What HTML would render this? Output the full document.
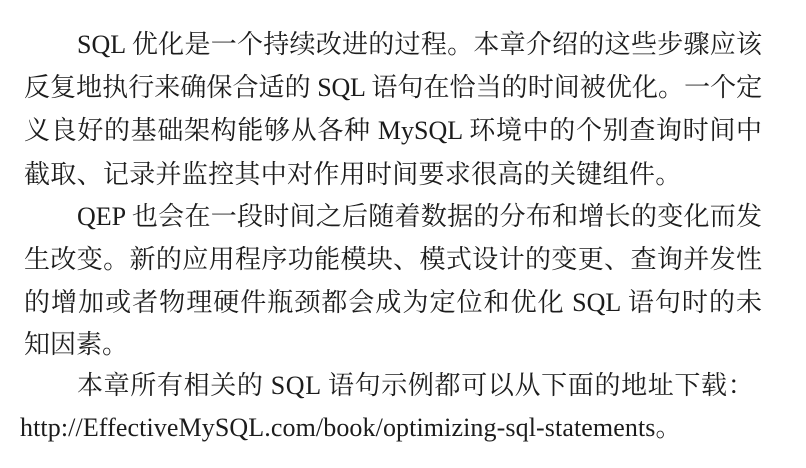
<!DOCTYPE html>
<html><head><meta charset="utf-8"><style>
html,body{margin:0;padding:0;background:#fff;width:806px;height:468px;overflow:hidden}
.l{position:absolute;left:24px;width:738px;height:43px;line-height:43px;font-size:26px;color:#1c1c1c;
font-family:"Liberation Serif","Noto Serif CJK SC",serif;white-space:nowrap}
.j{text-align:justify;text-align-last:justify}
.i{left:77px;width:685px}
</style></head><body>
<div class="l j i" style="top:23px">SQL 优化是一个持续改进的过程。本章介绍的这些步骤应该</div>
<div class="l j" style="top:66px;letter-spacing:-0.2px">反复地执行来确保合适的 SQL 语句在恰当的时间被优化。一个定</div>
<div class="l j" style="top:109px">义良好的基础架构能够从各种 MySQL 环境中的个别查询时间中</div>
<div class="l" style="top:153px;letter-spacing:0.3px">截取、记录并监控其中对作用时间要求很高的关键组件。</div>
<div class="l j i" style="top:195px">QEP 也会在一段时间之后随着数据的分布和增长的变化而发</div>
<div class="l j" style="top:238px">生改变。新的应用程序功能模块、模式设计的变更、查询并发性</div>
<div class="l j" style="top:281px">的增加或者物理硬件瓶颈都会成为定位和优化 SQL 语句时的未</div>
<div class="l" style="top:323px">知因素。</div>
<div class="l" style="top:364px;left:77px;width:auto;letter-spacing:0.65px">本章所有相关的 SQL 语句示例都可以从下面的地址下载：</div>
<div class="l" style="top:406px;left:20px;letter-spacing:0.1px">http://EffectiveMySQL.com/book/optimizing-sql-statements。</div>
</body></html>
